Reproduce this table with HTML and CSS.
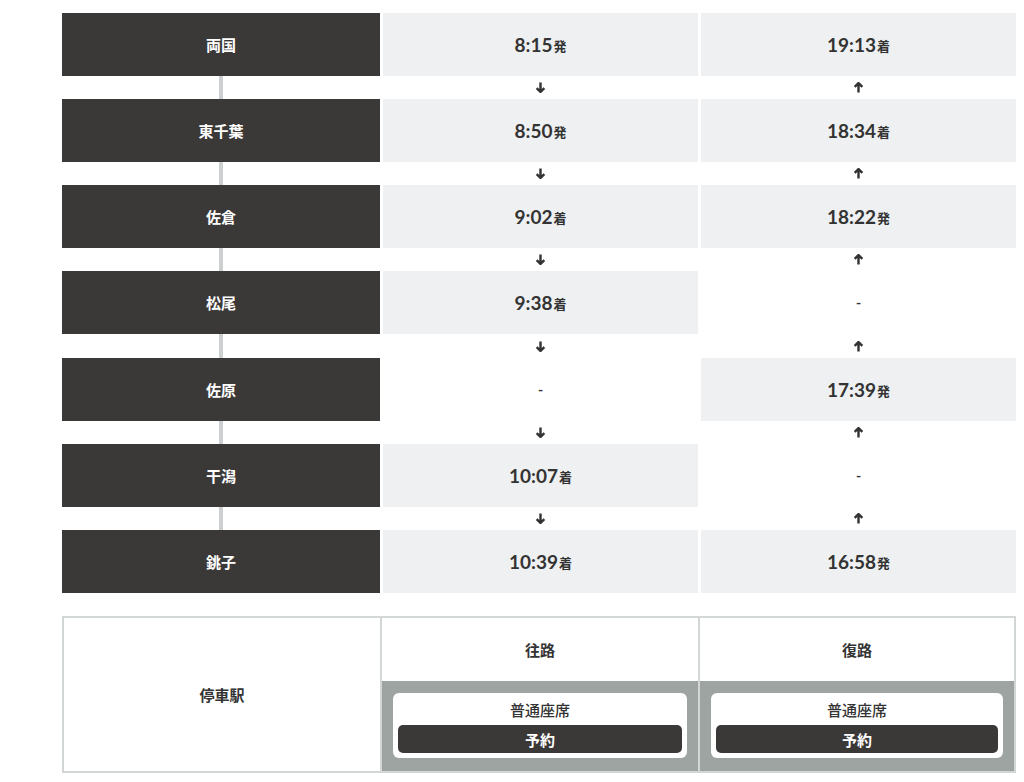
FILE: index.html
```html
<!DOCTYPE html>
<html lang="ja">
<head>
<meta charset="utf-8">
<link rel="stylesheet" href="styles.css">
</head>
<body>
<div class="wrap">
  <div class="timetable">
    <div class="station">両国</div>
    <div class="time">8:15<small>発</small></div>
    <div class="time">19:13<small>着</small></div>
    <div class="link"></div>
    <div class="arrow"><svg viewBox="0 0 10 10"><path d="M5 0.5V9M1.5 5.5L5 9L8.5 5.5"/></svg></div>
    <div class="arrow"><svg viewBox="0 0 10 10"><path d="M5 9.5V1M1.5 4.5L5 1L8.5 4.5"/></svg></div>

    <div class="station">東千葉</div>
    <div class="time">8:50<small>発</small></div>
    <div class="time">18:34<small>着</small></div>
    <div class="link"></div>
    <div class="arrow"><svg viewBox="0 0 10 10"><path d="M5 0.5V9M1.5 5.5L5 9L8.5 5.5"/></svg></div>
    <div class="arrow"><svg viewBox="0 0 10 10"><path d="M5 9.5V1M1.5 4.5L5 1L8.5 4.5"/></svg></div>

    <div class="station">佐倉</div>
    <div class="time">9:02<small>着</small></div>
    <div class="time">18:22<small>発</small></div>
    <div class="link"></div>
    <div class="arrow"><svg viewBox="0 0 10 10"><path d="M5 0.5V9M1.5 5.5L5 9L8.5 5.5"/></svg></div>
    <div class="arrow"><svg viewBox="0 0 10 10"><path d="M5 9.5V1M1.5 4.5L5 1L8.5 4.5"/></svg></div>

    <div class="station">松尾</div>
    <div class="time">9:38<small>着</small></div>
    <div class="time empty">-</div>
    <div class="link"></div>
    <div class="arrow"><svg viewBox="0 0 10 10"><path d="M5 0.5V9M1.5 5.5L5 9L8.5 5.5"/></svg></div>
    <div class="arrow"><svg viewBox="0 0 10 10"><path d="M5 9.5V1M1.5 4.5L5 1L8.5 4.5"/></svg></div>

    <div class="station">佐原</div>
    <div class="time empty">-</div>
    <div class="time">17:39<small>発</small></div>
    <div class="link"></div>
    <div class="arrow"><svg viewBox="0 0 10 10"><path d="M5 0.5V9M1.5 5.5L5 9L8.5 5.5"/></svg></div>
    <div class="arrow"><svg viewBox="0 0 10 10"><path d="M5 9.5V1M1.5 4.5L5 1L8.5 4.5"/></svg></div>

    <div class="station">干潟</div>
    <div class="time">10:07<small>着</small></div>
    <div class="time empty">-</div>
    <div class="link"></div>
    <div class="arrow"><svg viewBox="0 0 10 10"><path d="M5 0.5V9M1.5 5.5L5 9L8.5 5.5"/></svg></div>
    <div class="arrow"><svg viewBox="0 0 10 10"><path d="M5 9.5V1M1.5 4.5L5 1L8.5 4.5"/></svg></div>

    <div class="station">銚子</div>
    <div class="time">10:39<small>着</small></div>
    <div class="time">16:58<small>発</small></div>
  </div>

  <div class="booking">
    <div class="b-label">停車駅</div>
    <div class="b-head">往路</div>
    <div class="b-head">復路</div>
    <div class="b-body">
      <div class="card">
        <div class="card-title">普通座席</div>
        <a class="btn" href="#">予約</a>
      </div>
    </div>
    <div class="b-body">
      <div class="card">
        <div class="card-title">普通座席</div>
        <a class="btn" href="#">予約</a>
      </div>
    </div>
  </div>
</div>
</body>
</html>
```

FILE: styles.css
```css
html, body {
  margin: 0;
  padding: 0;
  background: #ffffff;
}

body {
  font-family: Lato, "Noto Sans CJK JP", sans-serif;
  color: #333333;
}

.wrap {
  width: 954px;
  margin-left: 62px;
  padding-top: 13px;
}

.timetable {
  display: grid;
  grid-template-columns: 318px 315px 315px;
  grid-auto-rows: 63px 23.17px;
  column-gap: 3px;
}

.station {
  background: #3b3838;
  color: #ffffff;
  font-family: "Noto Sans CJK JP", sans-serif;
  font-weight: 700;
  font-size: 15px;
  display: flex;
  align-items: center;
  justify-content: center;
}

.time {
  background: #eef0f1;
  display: flex;
  align-items: center;
  justify-content: center;
  font-weight: 700;
  font-size: 19px;
  color: #333333;
}

.time small {
  font-family: "Noto Sans CJK JP", sans-serif;
  font-size: 13px;
  font-weight: 700;
  margin-left: 1px;
  position: relative;
  top: 1px;
}

.time.empty {
  background: #ffffff;
  font-size: 14px;
}

.link {
  display: flex;
  justify-content: center;
}

.link::before {
  content: "";
  width: 4px;
  height: 100%;
  background: #ccd0d0;
}

.arrow {
  display: flex;
  align-items: center;
  justify-content: center;
}

.arrow svg {
  width: 11px;
  height: 11px;
  fill: none;
  stroke: #333333;
  stroke-width: 2.2;
}

.booking {
  margin-top: 23px;
  display: grid;
  grid-template-columns: 316px 316px 314px;
  grid-template-rows: 63px 90px;
  column-gap: 2px;
  border: 2px solid #d3d6d6;
  background: #d3d6d6;
}

.b-label {
  grid-row: 1 / span 2;
  background: #ffffff;
  display: flex;
  align-items: center;
  justify-content: center;
  font-family: "Noto Sans CJK JP", sans-serif;
  font-weight: 700;
  font-size: 15px;
}

.b-head {
  background: #ffffff;
  display: flex;
  align-items: center;
  justify-content: center;
  font-family: "Noto Sans CJK JP", sans-serif;
  font-weight: 700;
  font-size: 15px;
}

.b-body {
  background: #9ea4a2;
  padding: 12px 11px 0;
}

.card {
  background: #ffffff;
  border-radius: 6px;
  height: 65px;
  box-sizing: border-box;
  padding: 0 5px 5px;
  display: flex;
  flex-direction: column;
}

.card-title {
  height: 32px;
  display: flex;
  align-items: center;
  justify-content: center;
  font-family: "Noto Sans CJK JP", sans-serif;
  font-weight: 500;
  font-size: 15px;
  color: #333333;
  padding-top: 1px;
}

.btn {
  display: flex;
  align-items: center;
  justify-content: center;
  height: 28px;
  background: #3b3838;
  color: #ffffff;
  border-radius: 5px;
  text-decoration: none;
  font-family: "Noto Sans CJK JP", sans-serif;
  font-weight: 700;
  font-size: 15px;
}
```
